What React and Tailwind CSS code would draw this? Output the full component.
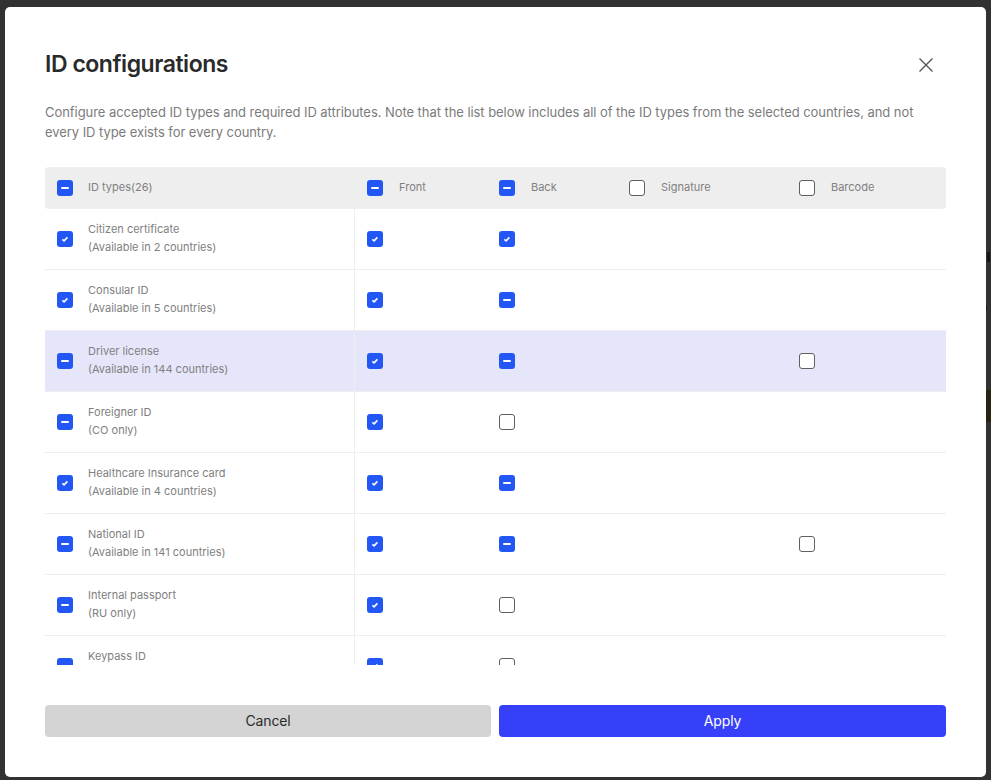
const rows = [
  ["Citizen certificate", "(Available in 2 countries)", "c", "c", "c", null],
  ["Consular ID", "(Available in 5 countries)", "c", "c", "m", null],
  ["Driver license", "(Available in 144 countries)", "m", "c", "m", "u", true],
  ["Foreigner ID", "(CO only)", "m", "c", "u", null],
  ["Healthcare Insurance card", "(Available in 4 countries)", "c", "c", "m", null],
  ["National ID", "(Available in 141 countries)", "m", "c", "m", "u"],
  ["Internal passport", "(RU only)", "m", "c", "u", null],
  ["Keypass ID", "", "m", "c", "u", null],
];

function Box({ state }) {
  if (state === "u") return <span className="block size-4 shrink-0 rounded-[3px] border border-[#5f5f5f] bg-white" />;
  return (
    <span className="flex size-4 shrink-0 items-center justify-center rounded-[3px] bg-[#2257f5]">
      {state === "m" ? (
        <span className="block h-[2px] w-2 rounded-[1px] bg-white" />
      ) : (
        <svg width="8" height="8" viewBox="0 0 8 8" fill="none">
          <path d="M1.4 4.3 3.1 5.8 6.4 2.4" stroke="#fff" strokeWidth="1.6" />
        </svg>
      )}
    </span>
  );
}

function HeadCell({ state, label, first }) {
  return (
    <div className={`flex items-center pl-3 ${first ? "gap-[15px]" : "gap-4"}`}>
      <Box state={state} />
      <span className="pb-[2px]">{label}</span>
    </div>
  );
}

export default function App() {
  return (
    <div className="relative flex h-[780px] w-[991px] overflow-hidden bg-[#323232] pl-[5px] pt-[7px] font-['Inter',sans-serif]">
      <span className="absolute left-[987px] top-[252px] h-[10px] w-[3px] bg-[#161616]" />
      <span className="absolute left-[986px] top-[305px] h-[5px] w-[1px] bg-[#1c1c1c]" />
      <span className="absolute left-[986px] top-[390px] h-[32px] w-[5px] bg-[#2c2212]" />
      <div className="relative flex h-[770px] w-[981px] flex-col rounded-[5px] bg-white px-10">
        <div className="flex items-start justify-between pt-[42px]">
          <h1 className="text-[23px] leading-[30px] font-semibold tracking-[-0.02em] text-[#2a2a2a]">ID configurations</h1>
          <button className="mr-[5px] mt-[1px] text-[#555]" aria-label="Close">
            <svg width="30" height="30" viewBox="0 0 30 30" fill="none" stroke="currentColor" strokeWidth="1.4">
              <path d="M8.5 8.5 21.5 21.5M21.5 8.5 8.5 21.5" />
            </svg>
          </button>
        </div>
        <p className="mt-[22px] text-[13px] leading-[20px] tracking-[-0.06px] text-[#7b7b7b]">
          Configure accepted ID types and required ID attributes. Note that the list below includes all of the ID types from the selected countries, and not every ID type exists for every country.
        </p>
        <div className="mt-[25px] grid h-[42px] shrink-0 grid-cols-[310px_132px_130px_170px_1fr] items-center rounded-[4px] bg-[#eeeeee] text-[11px] text-[#808080]">
          <HeadCell state="m" label="ID types(26)" first />
          <HeadCell state="m" label="Front" />
          <HeadCell state="m" label="Back" />
          <HeadCell state="u" label="Signature" />
          <HeadCell state="u" label="Barcode" />
        </div>
        <div className="h-[456px] shrink-0 overflow-hidden">
          {rows.map(([name, sub, all, front, back, barcode, active]) => (
            <div
              key={name}
              className={`grid h-[61px] grid-cols-[310px_132px_130px_170px_1fr] items-stretch border-b border-[#eeeeee] text-[11px] leading-[18px] text-[#808080] ${active ? "bg-[#e6e6fb]" : ""}`}
            >
              <div className="flex items-center gap-[15px] border-r border-[#eeeeee] pl-3">
                <Box state={all} />
                <div className="pb-[2px]">
                  <div>{name}</div>
                  <div>{sub || "\u00a0"}</div>
                </div>
              </div>
              <div className="flex items-center pl-3"><Box state={front} /></div>
              <div className="flex items-center pl-3"><Box state={back} /></div>
              <div />
              <div className="flex items-center pl-3">{barcode && <Box state={barcode} />}</div>
            </div>
          ))}
        </div>
        <div className="mt-10 flex gap-2">
          <button className="h-8 w-[446px] rounded-[4px] bg-[#d4d4d4] pb-[2px] text-[14px] tracking-[-0.01em] text-[#2b2b2b]">Cancel</button>
          <button className="h-8 flex-1 rounded-[4px] bg-[#3640f8] pb-[2px] text-[14px] tracking-[-0.01em] text-white">Apply</button>
        </div>
      </div>
    </div>
  );
}
